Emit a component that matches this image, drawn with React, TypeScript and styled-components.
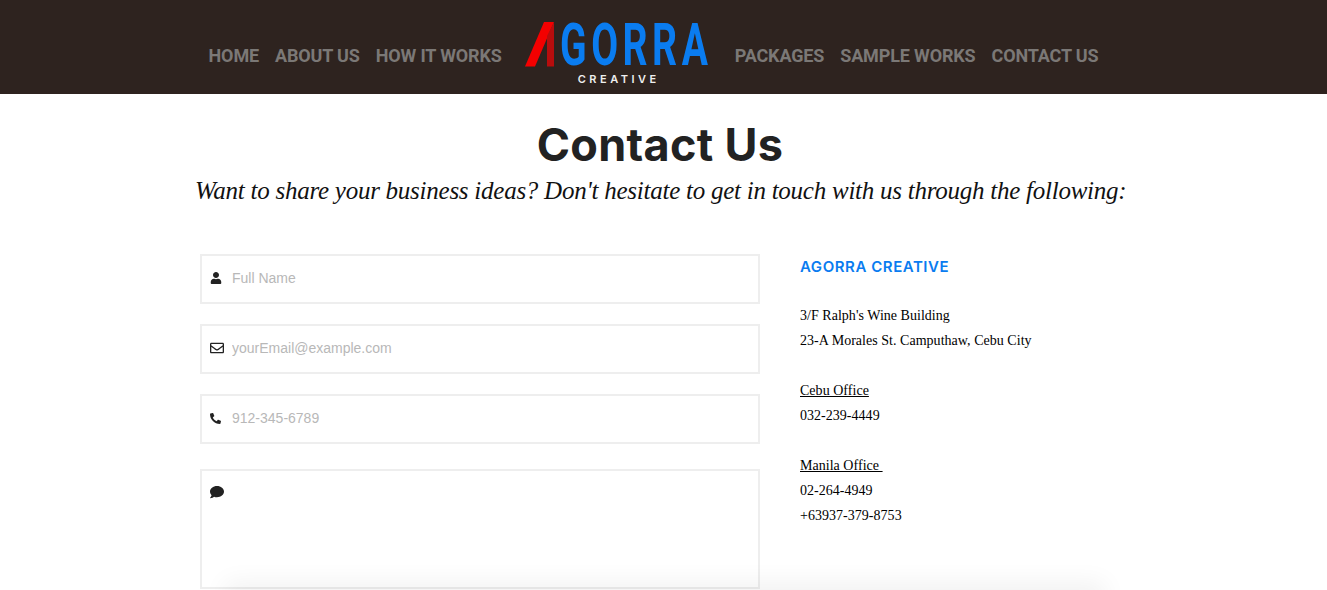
import React from "react";
import styled, { createGlobalStyle } from "styled-components";
import { FaUser, FaRegEnvelope, FaPhone, FaComment } from "react-icons/fa";

const Global = createGlobalStyle`
  html, body { margin: 0; padding: 0; background: #fff; overflow: hidden; }
  body { font-family: "Liberation Serif", serif; color: #111; }
  * { box-sizing: border-box; }
`;

const Page = styled.div`
  position: relative;
  height: 590px;
  overflow: hidden;
`;

const Header = styled.header`
  height: 94px;
  background: #2e231f;
  display: flex;
  justify-content: center;
  align-items: flex-start;
  padding-right: 20px;
`;

const NavGroup = styled.nav`
  display: flex;
  gap: 16px;
  padding-top: 45px;
`;

const NavLink = styled.a`
  font-family: "Roboto", sans-serif;
  font-weight: 700;
  font-size: 18px;
  line-height: 22px;
  letter-spacing: -0.15px;
  color: #7b7876;
  white-space: nowrap;
`;

const Logo = styled.div`
  width: 185px;
  margin: 22px 25px 0 23px;
  display: flex;
  flex-direction: column;
  align-items: center;
`;

const LogoTop = styled.div`
  display: flex;
  align-items: flex-start;
  width: 185px;
  height: 46px;
`;

const LogoWord = styled.span`
  font-family: "Roboto", sans-serif;
  font-weight: 700;
  font-size: 60px;
  line-height: 46px;
  color: #0a7cf0;
  letter-spacing: 7px;
  transform: scaleX(0.65);
  transform-origin: left center;
  white-space: nowrap;
  margin-left: 3px;
`;

const LogoSub = styled.span`
  font-family: "Inter", sans-serif;
  font-weight: 600;
  font-size: 11px;
  line-height: 12px;
  letter-spacing: 3.5px;
  color: #eee;
  margin-top: 5px;
  margin-left: 3px;
`;

const Main = styled.main`
  width: 927px;
  margin: 0 auto;
`;

const Hero = styled.div`
  width: 920px;
`;

const Title = styled.h1`
  margin: 23px 0 0;
  font-family: "Inter", sans-serif;
  font-weight: 700;
  font-size: 45px;
  line-height: 56px;
  letter-spacing: 0.3px;
  text-align: center;
  color: #222;
`;

const Subtitle = styled.p`
  margin: 1px 0 0 -5px;
  font-family: "Liberation Serif", serif;
  font-style: italic;
  font-size: 25px;
  letter-spacing: -0.25px;
  line-height: 34px;
  color: #111;
  white-space: nowrap;
`;

const Columns = styled.div`
  display: grid;
  grid-template-columns: 560px 1fr;
  column-gap: 40px;
  margin-top: 46px;
`;

const Form = styled.form`
  display: flex;
  flex-direction: column;
`;

const Field = styled.label<{ $gap?: number; $tall?: boolean }>`
  display: flex;
  align-items: ${(p) => (p.$tall ? "flex-start" : "center")};
  height: ${(p) => (p.$tall ? 120 : 50)}px;
  margin-bottom: ${(p) => p.$gap ?? 20}px;
  border: 2px solid #eee;
  padding: ${(p) => (p.$tall ? "14px 0 0 8px" : "0 0 2px 8px")};
  background: #fff;
`;

const IconSlot = styled.span`
  width: 22px;
  display: flex;
  align-items: center;
  color: #222;
  font-size: 13px;
`;

const Input = styled.input`
  flex: 1;
  border: 0;
  outline: 0;
  padding: 0;
  height: 30px;
  font-family: "Liberation Sans", sans-serif;
  font-size: 14px;
  background: transparent;
  &::placeholder { color: #b8b8b8; opacity: 1; }
`;

const Info = styled.aside`
  font-size: 14px;
  line-height: 25px;
  color: #000;
  letter-spacing: 0.03px;
`;

const InfoHead = styled.h3`
  margin: 0 0 24px;
  font-family: "Inter", sans-serif;
  font-weight: 600;
  font-size: 15px;
  line-height: 25px;
  letter-spacing: 0.55px;
  color: #0a7cf0;
`;

const Block = styled.p`
  margin: 0 0 25px;
`;

const U = styled.span`
  text-decoration: underline;
  white-space: pre;
`;

const Shade = styled.div`
  position: absolute;
  left: 235px;
  width: 860px;
  bottom: -16px;
  height: 12px;
  box-shadow: 0 -2px 24px 10px rgba(0, 0, 0, 0.055);
  pointer-events: none;
`;

export default function App() {
  return (
    <Page>
      <Global />
      <Header>
        <NavGroup>
          <NavLink>HOME</NavLink>
          <NavLink>ABOUT US</NavLink>
          <NavLink>HOW IT WORKS</NavLink>
        </NavGroup>
        <Logo>
          <LogoTop>
            <svg width="32" height="46" viewBox="0 0 32 46" style={{ flex: "none" }}>
              <polygon points="0,44.5 19,0 29,0 10,44.5" fill="#f40000" />
              <polygon points="22,44.5 22,14 29,0 29,44.5" fill="#b80d0d" />
            </svg>
            <LogoWord>GORRA</LogoWord>
          </LogoTop>
          <LogoSub>CREATIVE</LogoSub>
        </Logo>
        <NavGroup>
          <NavLink>PACKAGES</NavLink>
          <NavLink>SAMPLE WORKS</NavLink>
          <NavLink>CONTACT US</NavLink>
        </NavGroup>
      </Header>
      <Main>
        <Hero>
          <Title>Contact Us</Title>
          <Subtitle>Want to share your business ideas? Don't hesitate to get in touch with us through the following:</Subtitle>
        </Hero>
        <Columns>
          <Form>
            <Field>
              <IconSlot><FaUser size={12} /></IconSlot>
              <Input placeholder="Full Name" />
            </Field>
            <Field>
              <IconSlot><FaRegEnvelope size={14} /></IconSlot>
              <Input placeholder="yourEmail@example.com" />
            </Field>
            <Field $gap={25}>
              <IconSlot><FaPhone size={11} style={{ transform: "scaleX(-1)" }} /></IconSlot>
              <Input placeholder="912-345-6789" />
            </Field>
            <Field $tall>
              <IconSlot><FaComment size={14} /></IconSlot>
            </Field>
          </Form>
          <Info>
            <InfoHead>AGORRA CREATIVE</InfoHead>
            <Block>3/F Ralph's Wine Building<br />23-A Morales St. Camputhaw, Cebu City</Block>
            <Block><U>Cebu Office</U><br />032-239-4449</Block>
            <Block><U>Manila Office </U><br />02-264-4949<br />+63937-379-8753</Block>
          </Info>
        </Columns>
      </Main>
      <Shade />
    </Page>
  );
}
